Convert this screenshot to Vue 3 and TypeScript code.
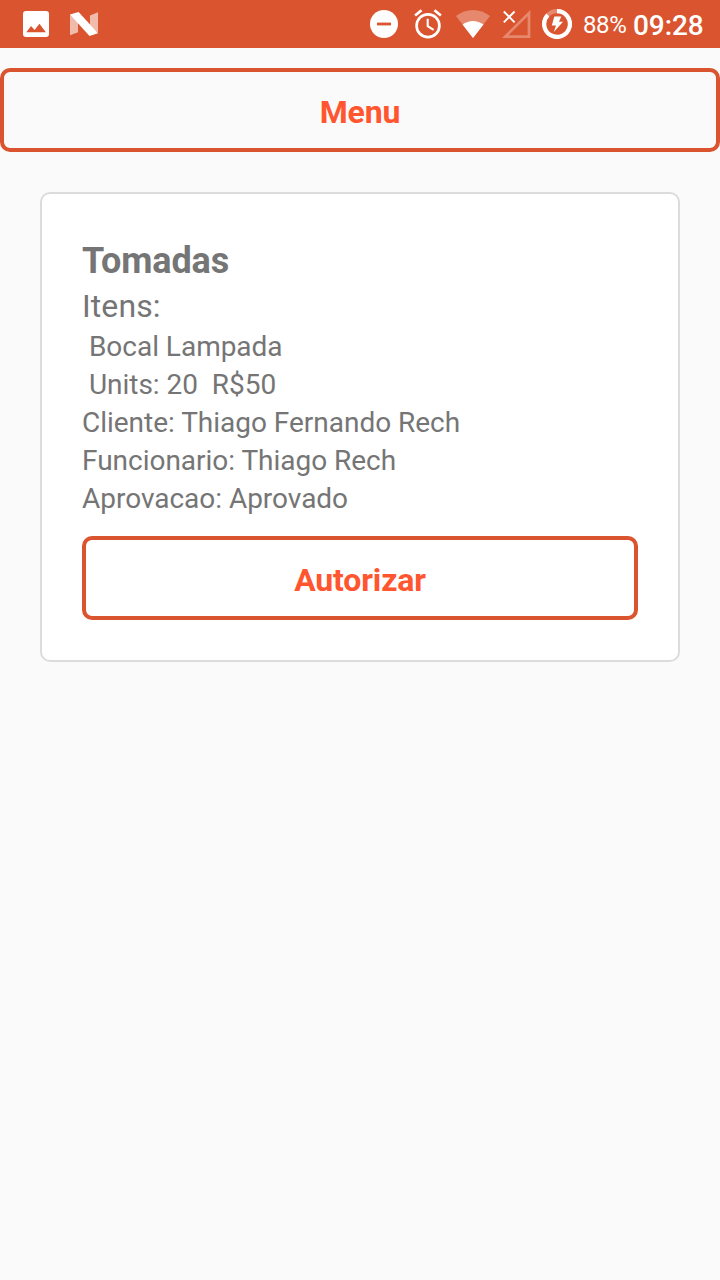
<script setup lang="ts">
interface Item {
  name: string
  units: number
  price: string
}

interface Order {
  title: string
  items: Item[]
  client: string
  employee: string
  approval: string
}

const order: Order = {
  title: 'Tomadas',
  items: [{ name: 'Bocal Lampada', units: 20, price: 'R$50' }],
  client: 'Thiago Fernando Rech',
  employee: 'Thiago Rech',
  approval: 'Aprovado',
}
</script>

<template>
  <div class="screen">
    <header class="status">
      <div class="notifications">
        <svg width="26" height="26" viewBox="0 0 26 26">
          <path fill="#fff" fill-rule="evenodd" d="M3 0H23A3 3 0 0 1 26 3V23A3 3 0 0 1 23 26H3A3 3 0 0 1 0 23V3A3 3 0 0 1 3 0ZM3.3 21.3H22.9L16.4 12.8L11.6 19L8.1 14.9Z" />
        </svg>
        <svg width="28" height="24" viewBox="0 0 28 24">
          <path fill="#fff" fill-opacity=".6" d="M0 2.4V23.3L8 20.3V9ZM28 0.3L20 3.4V14L28 21Z" />
          <path fill="#fff" d="M0 2.6L8.6 0L28 21.3L19.5 24Z" />
        </svg>
      </div>
      <div class="indicators">
        <svg class="dnd" width="28" height="28" viewBox="0 0 28 28">
          <circle cx="14" cy="14" r="14" fill="#fff" />
          <path d="M7 14H21" stroke="#da552f" stroke-width="2.8" />
        </svg>
        <svg class="alarm" width="28" height="30" viewBox="0 0 28 30">
          <g fill="none" stroke="#fff">
            <circle cx="14" cy="16.7" r="11.4" stroke-width="2.7" />
            <path d="M1.1 6.5L7.5 1.2M20.5 1.2L26.9 6.5" stroke-width="2.7" />
            <path d="M13.7 9.8V17.2L19.6 20.8" stroke-width="2.1" />
          </g>
        </svg>
        <svg class="wifi" width="34" height="28" viewBox="0 0 34 28">
          <path fill="#fff" fill-opacity=".3" d="M17 28L0 6C10 -2 24 -2 34 6Z" />
          <path fill="#fff" d="M17 28L6.5 14.5C13 9.7 21 9.7 27.5 14.5Z" />
        </svg>
        <svg class="signal" width="29" height="28" viewBox="0 0 29 28">
          <path fill="none" stroke="#fff" stroke-opacity=".3" stroke-width="2.7" d="M3.3 26.6H27V3.1Z" />
          <path fill="none" stroke="#fff" stroke-width="1.9" d="M1.8 1.5L12.6 12.3M12.6 1.5L1.8 12.3" />
        </svg>
        <svg class="battery" width="30" height="30" viewBox="0 0 30 30">
          <circle cx="15" cy="15" r="12.9" fill="none" stroke="#fff" stroke-opacity=".3" stroke-width="4.2" />
          <path fill="none" stroke="#fff" stroke-width="4.2" d="M15 2.1A12.9 12.9 0 1 1 5.9 5.9" />
          <path fill="#fff" d="M12.3 7.5H19.3L17 12.8H21L11.8 23L14 16.6H9.8Z" />
        </svg>
        <span class="percent">88%</span>
        <span class="clock">09:28</span>
      </div>
    </header>

    <button class="outlined menu" type="button"><span>Menu</span></button>

    <main class="card">
      <h1>{{ order.title }}</h1>
      <h2>Itens:</h2>
      <template v-for="item in order.items" :key="item.name">
        <p>&nbsp;{{ item.name }}</p>
        <p>&nbsp;Units: {{ item.units }}&nbsp; {{ item.price }}</p>
      </template>
      <p>Cliente: {{ order.client }}</p>
      <p>Funcionario: {{ order.employee }}</p>
      <p>Aprovacao: {{ order.approval }}</p>
      <button class="outlined approve" type="button"><span>Autorizar</span></button>
    </main>
  </div>
</template>

<style>
body {
  background: #fafafa;
}
</style>

<style scoped>
.screen {
  min-height: 1280px;
  background: #fafafa;
  color: #757575;
  font-family: Roboto, sans-serif;
}

.status {
  display: flex;
  justify-content: space-between;
  box-sizing: border-box;
  height: 48px;
  padding: 0 16px 0 23px;
  background: #da552f;
  color: #fff;
}

.notifications,
.indicators {
  display: flex;
  align-items: center;
}

.notifications {
  gap: 21px;
}

svg {
  display: block;
  flex: none;
}

.alarm {
  margin-left: 16px;
}

.wifi {
  margin-left: 14px;
}

.signal {
  margin-left: 12px;
}

.battery {
  margin-left: 11px;
}

.percent {
  width: 43px;
  margin-left: 11px;
  font-size: 24px;
  letter-spacing: -0.4px;
  line-height: 48px;
  padding-top: 2px;
  white-space: nowrap;
}

.clock {
  width: 71px;
  margin-left: 7px;
  font-size: 28px;
  font-weight: 500;
  letter-spacing: -0.1px;
  line-height: 48px;
  padding-top: 4px;
  white-space: nowrap;
}

.outlined {
  display: block;
  box-sizing: border-box;
  width: 100%;
  height: 84px;
  padding: 4px 0 0;
  border: 4px solid #da552f;
  border-radius: 10px;
  background: transparent;
  color: #ff5630;
  font: 700 32px/38px Roboto, sans-serif;
  letter-spacing: -0.15px;
  text-align: center;
}

.menu {
  margin: 20px 0 40px;
}

.card {
  box-sizing: border-box;
  height: 470px;
  margin: 0 40px;
  padding: 43px 40px 40px;
  border: 2px solid #dcdcdc;
  border-radius: 10px;
  background: #fff;
}

h1,
h2,
p {
  margin: 0;
  white-space: nowrap;
}

h1 {
  font-size: 36px;
  font-weight: 700;
  letter-spacing: -0.15px;
  line-height: 48px;
}

h2 {
  margin-top: -1px;
  font-size: 32px;
  font-weight: 400;
  letter-spacing: 0.1px;
  line-height: 44px;
}

p {
  font-size: 28px;
  letter-spacing: -0.02px;
  line-height: 38px;
}

.approve {
  margin-top: 18px;
}
</style>
